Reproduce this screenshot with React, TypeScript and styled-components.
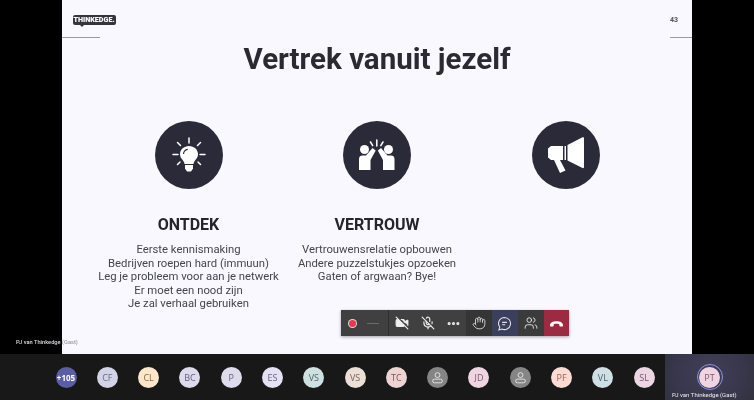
import React from 'react'
import styled, { createGlobalStyle } from 'styled-components'
import { VideoOff, MicOff, MoreHorizontal, Hand, Users } from 'lucide-react'

const columns = [
  {
    title: 'ONTDEK',
    icon: 'bulb',
    lines: [
      'Eerste kennismaking',
      'Bedrijven roepen hard (immuun)',
      'Leg je probleem voor aan je netwerk',
      'Er moet een nood zijn',
      'Je zal verhaal gebruiken',
    ],
  },
  {
    title: 'VERTROUW',
    icon: 'five',
    lines: ['Vertrouwensrelatie opbouwen', 'Andere puzzelstukjes opzoeken', 'Gaten of argwaan? Bye!'],
  },
  { title: '', icon: 'horn', lines: [] },
]

const people = [
  { label: '+105', bg: '#5b5ea6', fg: '#ffffff' },
  { label: 'CF', bg: '#d3d3e8', fg: '#6a6a88' },
  { label: 'CL', bg: '#fde7cb', fg: '#8e6a3c' },
  { label: 'BC', bg: '#dcdaeb', fg: '#625f80' },
  { label: 'P', bg: '#dedcec', fg: '#66637f' },
  { label: 'ES', bg: '#e3e1f3', fg: '#66647e' },
  { label: 'VS', bg: '#cfe0e0', fg: '#4d6a6c' },
  { label: 'VS', bg: '#ecdfd6', fg: '#7a675a' },
  { label: 'TC', bg: '#eed3d3', fg: '#7e5458' },
  { label: '', bg: '#858585', fg: '#e8e8e8' },
  { label: 'JD', bg: '#efd5e2', fg: '#84566c' },
  { label: '', bg: '#858585', fg: '#e8e8e8' },
  { label: 'PF', bg: '#fcdcd2', fg: '#a0604e' },
  { label: 'VL', bg: '#cfe0e4', fg: '#4a6870' },
  { label: 'SL', bg: '#ecd6e4', fg: '#80506c' },
]

function SlideIcon({ name }: { name: string }) {
  if (name === 'bulb') {
    return (
      <svg width="34" height="36" viewBox="0 0 34 36">
        <path d="M17 9c-5 0-9 3.600-9 8.200 0 3 1.700 4.600 3 6.300.9 1.200 1.400 2.300 1.500 3.500h9c.1-1.200.6-2.300 1.500-3.500 1.300-1.700 3-3.300 3-6.300C26 12.600 22 9 17 9z" fill="#fff" />
        <path d="M11.500 17c.2-2.400 1.800-4.200 4.200-4.600" fill="none" stroke="#2b2a38" strokeWidth="1.100" />
        <path d="M13 28h8v3.500l-2 3h-4l-2-3z" fill="#fff" />
        <path d="M17 1v5M5.500 5.500l3 3M28.500 5.500l-3 3M1 17.500h5M28 17.500h5M8 25l-2.500 2.500M26 25l2.500 2.500" stroke="#fff" strokeWidth="1.500" strokeLinecap="round" />
      </svg>
    )
  }
  if (name === 'five') {
    return (
      <svg width="36" height="32" viewBox="0 0 36 32">
        <circle cx="5.500" cy="10.500" r="4.500" fill="#fff" />
        <circle cx="29.500" cy="10.500" r="4.500" fill="#fff" />
        <path d="M0 31V20c0-2.400 1.600-3.500 3.500-3.500h3.500l6.500-7.500 3.200 2.600L11.500 21v10z" fill="#fff" />
        <path d="M35.500 31V20c0-2.400-1.600-3.500-3.500-3.500h-3.500L22 9l-3.200 2.600L24 21v10z" fill="#fff" />
        <path d="M17.800 1v6M11.500 3l2.200 3.600M24 3l-2.200 3.600" stroke="#fff" strokeWidth="1.500" strokeLinecap="round" />
      </svg>
    )
  }
  return (
    <svg width="36" height="36" viewBox="0 0 36 36">
      <path d="M0 11.500L3 9h12v14H3l-3-2.500z" fill="#fff" />
      <path d="M16.500 9h1.500v14h-1.500z" fill="#fff" />
      <path d="M19.500 8L34.500 .3c.8-.4 1.500 0 1.500 1V30c0 1-.7 1.400-1.500 1L19.500 23.500z" fill="#fff" />
      <path d="M6 23h6l5.500 10.500-5.500 2.500z" fill="#fff" />
    </svg>
  )
}

function HangUp() {
  return (
    <svg width="15" height="15" viewBox="0 0 16 16">
      <path d="M1 10c0-3 3-4.500 7-4.500s7 1.500 7 4.500c0 .8-.4 1.200-1 1.200h-2c-.6 0-1-.4-1-1V8.800C10 8.300 9 8.200 8 8.200s-2 .1-3 .6v1.400c0 .6-.4 1-1 1H2c-.6 0-1-.4-1-1.200z" fill="#fff" />
    </svg>
  )
}

function ChatIcon() {
  return (
    <svg width="15" height="15" viewBox="0 0 16 16" fill="none" stroke="#e3e3ee" strokeWidth="1.100">
      <path d="M8 1.500a6.500 6.500 0 1 1-2.800 12.400L2 14.800l.9-3A6.500 6.500 0 0 1 8 1.500z" />
      <path d="M5.500 6.800h5M5.500 9.300h3.200" />
    </svg>
  )
}

function GuestIcon() {
  return (
    <svg width="13" height="13" viewBox="0 0 16 16" fill="none" stroke="#e8e8e8" strokeWidth="1.100">
      <circle cx="8" cy="5" r="3" />
      <rect x="2" y="10" width="12" height="4.500" rx="2.250" />
    </svg>
  )
}

export default function App() {
  return (
    <Screen>
      <GlobalStyle />
      <Stage>
        <Slide>
          <SlideHeader>
            <LogoCorner>
              <Logo>
                THINKEDGE.
                <LogoTail />
              </Logo>
            </LogoCorner>
            <PageCorner>
              <PageNumber>43</PageNumber>
            </PageCorner>
          </SlideHeader>
          <Title>Vertrek vanuit jezelf</Title>
          <Columns>
            {columns.map((col) => (
              <Column key={col.icon}>
                <IconCircle>
                  <SlideIcon name={col.icon} />
                </IconCircle>
                {col.title && <ColumnTitle>{col.title}</ColumnTitle>}
                <BodyText>
                  {col.lines.map((line) => (
                    <div key={line}>{line}</div>
                  ))}
                </BodyText>
              </Column>
            ))}
          </Columns>
        </Slide>
        <SpeakerLabel>
          PJ van Thinkedge <GuestMark>(Gast)</GuestMark>
        </SpeakerLabel>
        <CallBar>
          <RecordGroup>
            <RecordDot />
            <Timer />
          </RecordGroup>
          <ToolButton><VideoOff size={14} color="#eeeeee" fill="#eeeeee" /></ToolButton>
          <ToolButton><MicOff size={14} color="#eeeeee" /></ToolButton>
          <ToolButton><MoreHorizontal size={15} color="#f2f2f2" strokeWidth={3} /></ToolButton>
          <ToolButton $bg="#353535"><Hand size={14} color="#dddddd" strokeWidth={1.5} /></ToolButton>
          <ToolButton $bg="#3c3f5c"><ChatIcon /></ToolButton>
          <ToolButton $bg="#3b3b3b"><Users size={14} color="#eeeeee" strokeWidth={1.5} /></ToolButton>
          <ToolButton $bg="#9c2b42"><HangUp /></ToolButton>
        </CallBar>
      </Stage>
      <BottomBar>
        <Roster>
          {people.map((p, i) => (
            <Avatar key={i} $bg={p.bg} $fg={p.fg} $small={p.label.length > 2}>
              {p.label || <GuestIcon />}
            </Avatar>
          ))}
        </Roster>
        <SelfTile>
          <SelfRing>
            <Avatar $bg="#efd5e2" $fg="#84566c">PT</Avatar>
          </SelfRing>
          <SelfName>PJ van Thinkedge (Gast)</SelfName>
        </SelfTile>
      </BottomBar>
    </Screen>
  )
}

const GlobalStyle = createGlobalStyle`
  html, body {
    margin: 0;
    padding: 0;
    background: #000;
  }
  * {
    box-sizing: border-box;
  }
`

// the reference is a compressed video frame, so everything is slightly soft
const Screen = styled.div`
  width: 754px;
  height: 400px;
  display: flex;
  flex-direction: column;
  overflow: hidden;
  font-family: Roboto, "Liberation Sans", sans-serif;
  background: #000;
  filter: blur(0.35px);
`

const Stage = styled.div`
  position: relative;
  height: 354px;
  display: flex;
  justify-content: center;
  background: #000;
`

const Slide = styled.div`
  width: 630px;
  height: 100%;
  display: flex;
  flex-direction: column;
  background: #f9f8ff;
  color: #2b2a33;
`

const SlideHeader = styled.div`
  height: 38px;
  display: flex;
  justify-content: space-between;
`

const LogoCorner = styled.div`
  width: 38px;
  height: 38px;
  padding: 15px 0 0 10.500px;
  border-bottom: 1px solid #9b9ba2;
`

const Logo = styled.div`
  position: relative;
  width: 43px;
  height: 10px;
  border-radius: 2px;
  background: #36353d;
  color: #fff;
  font-size: 7.200px;
  font-weight: 900;
  line-height: 10px;
  text-align: center;
  white-space: nowrap;
`

const LogoTail = styled.span`
  position: absolute;
  left: 7px;
  bottom: -2px;
  border-left: 2px solid transparent;
  border-right: 2px solid transparent;
  border-top: 2px solid #36353d;
`

const PageCorner = styled.div`
  width: 22px;
  height: 38px;
  padding-top: 15px;
  border-bottom: 1px solid #9b9ba2;
`

const PageNumber = styled.div`
  font-size: 7px;
  font-weight: 700;
  line-height: 10px;
  color: #55555c;
`

const Title = styled.h1`
  margin: 1px 0 0;
  height: 40px;
  font-size: 29.500px;
  font-weight: 700;
  line-height: 40px;
  text-align: center;
  color: #2b2a33;
`

const Columns = styled.div`
  display: grid;
  grid-template-columns: repeat(3, 188.500px);
  justify-content: center;
  margin-top: 42px;
`

const Column = styled.div`
  display: flex;
  flex-direction: column;
  align-items: center;
`

const IconCircle = styled.div`
  width: 68px;
  height: 68px;
  border-radius: 50%;
  display: flex;
  align-items: center;
  justify-content: center;
  background: #2b2a38;
`

const ColumnTitle = styled.div`
  margin-top: 25px;
  font-size: 16px;
  font-weight: 700;
  line-height: 22px;
  color: #26252e;
`

const BodyText = styled.div`
  margin-top: 7px;
  font-size: 11.300px;
  font-weight: 400;
  line-height: 13.500px;
  text-align: center;
  white-space: nowrap;
  color: #45454d;
`

const SpeakerLabel = styled.div`
  position: absolute;
  left: 16px;
  top: 338px;
  font-size: 5.700px;
  font-weight: 500;
  line-height: 8px;
  color: #dcdcdc;
`

const GuestMark = styled.span`
  color: #9a9a9a;
`

const CallBar = styled.div`
  position: absolute;
  left: 341px;
  top: 310px;
  height: 26px;
  display: flex;
  background: #404040;
  box-shadow: 0 1px 3px rgba(0, 0, 0, 0.35);
`

const RecordGroup = styled.div`
  width: 48px;
  display: flex;
  align-items: center;
  gap: 11px;
  padding-left: 8px;
  border-right: 1px solid #2e2e2e;
`

const RecordDot = styled.span`
  width: 7px;
  height: 7px;
  border-radius: 50%;
  background: #e8394f;
  box-shadow: 0 0 0 1px #d9d9d9;
`

const Timer = styled.span`
  width: 12px;
  height: 1px;
  background: #6a6a6a;
`

const ToolButton = styled.div<{ $bg?: string }>`
  width: 25.750px;
  height: 26px;
  display: flex;
  align-items: center;
  justify-content: center;
  background: ${(p) => p.$bg || 'transparent'};
`

const BottomBar = styled.div`
  height: 46px;
  display: flex;
  background: #181818;
`

const Roster = styled.div`
  flex: 1;
  display: flex;
  align-items: center;
  gap: 20.300px;
  padding-left: 55.500px;
`

const Avatar = styled.div<{ $bg: string; $fg: string; $small?: boolean }>`
  width: 21px;
  height: 21px;
  flex: none;
  border-radius: 50%;
  display: flex;
  align-items: center;
  justify-content: center;
  background: ${(p) => p.$bg};
  color: ${(p) => p.$fg};
  font-size: ${(p) => (p.$small ? '8px' : '9px')};
  font-weight: ${(p) => (p.$small ? 700 : 500)};
  font-family: "Open Sans", Roboto, sans-serif;
`

const SelfTile = styled.div`
  position: relative;
  width: 89px;
  display: flex;
  flex-direction: column;
  align-items: center;
  padding-top: 10px;
  background: radial-gradient(circle at 50% 40%, #413f58 0%, #37364a 70%, #33323f 100%);
`

const SelfRing = styled.div`
  width: 26px;
  height: 26px;
  flex: none;
  border: 1.500px solid #8f91e8;
  border-radius: 50%;
  display: flex;
  align-items: center;
  justify-content: center;
`

const SelfName = styled.div`
  align-self: flex-start;
  margin: 1px 0 0 7px;
  font-size: 6px;
  line-height: 8px;
  white-space: nowrap;
  color: #ececec;
`
